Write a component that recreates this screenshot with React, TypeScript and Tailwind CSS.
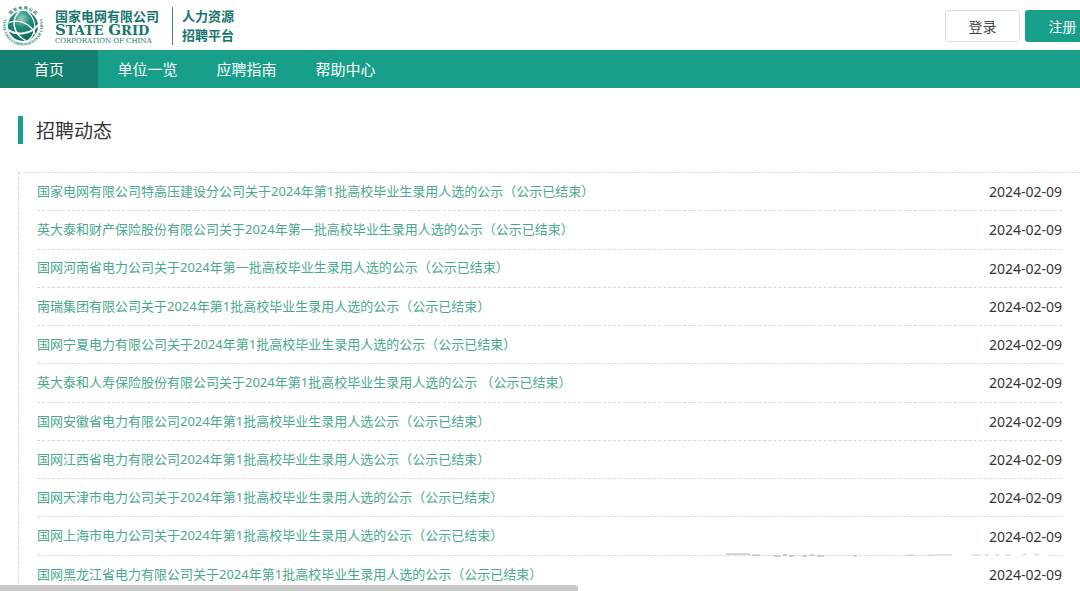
const sansFont = "font-['Noto_Sans','Noto_Sans_CJK_SC',sans-serif]";

const navItems = ["首页", "单位一览", "应聘指南", "帮助中心"];

const notices = [
  { title: "国家电网有限公司特高压建设分公司关于2024年第1批高校毕业生录用人选的公示（公示已结束）", date: "2024-02-09" },
  { title: "英大泰和财产保险股份有限公司关于2024年第一批高校毕业生录用人选的公示（公示已结束）", date: "2024-02-09" },
  { title: "国网河南省电力公司关于2024年第一批高校毕业生录用人选的公示（公示已结束）", date: "2024-02-09" },
  { title: "南瑞集团有限公司关于2024年第1批高校毕业生录用人选的公示（公示已结束）", date: "2024-02-09" },
  { title: "国网宁夏电力有限公司关于2024年第1批高校毕业生录用人选的公示（公示已结束）", date: "2024-02-09" },
  { title: "英大泰和人寿保险股份有限公司关于2024年第1批高校毕业生录用人选的公示 （公示已结束）", date: "2024-02-09" },
  { title: "国网安徽省电力有限公司2024年第1批高校毕业生录用人选公示（公示已结束）", date: "2024-02-09" },
  { title: "国网江西省电力有限公司2024年第1批高校毕业生录用人选公示（公示已结束）", date: "2024-02-09" },
  { title: "国网天津市电力公司关于2024年第1批高校毕业生录用人选的公示（公示已结束）", date: "2024-02-09" },
  { title: "国网上海市电力公司关于2024年第1批高校毕业生录用人选的公示（公示已结束）", date: "2024-02-09" },
  { title: "国网黑龙江省电力有限公司关于2024年第1批高校毕业生录用人选的公示（公示已结束）", date: "2024-02-09" },
];

function GlobeLogo() {
  return (
    <svg viewBox="0 0 44 44" className="h-11 w-11 shrink-0" aria-hidden="true">
      <defs>
        <radialGradient id="globe" cx="0.45" cy="0.25" r="0.75">
          <stop offset="0" stopColor="#9bd0c6" />
          <stop offset="0.4" stopColor="#23897c" />
          <stop offset="1" stopColor="#0b6a5f" />
        </radialGradient>
        <clipPath id="globe-clip">
          <circle cx="22" cy="22" r="15" />
        </clipPath>
        <path id="ring-top" d="M6.600 15 A17 17 0 0 1 37.400 15" />
        <path id="ring-bottom" d="M3.500 14 A20 20 0 1 0 40.500 14" />
      </defs>
      <circle cx="22" cy="22" r="15" fill="url(#globe)" />
      <g clipPath="url(#globe-clip)" fill="none" stroke="#fff">
        <path d="M20 6 C9 15 11 30 27 38" strokeWidth="1.500" />
        <path d="M26 7 C37 17 36 31 25 38" strokeWidth="1.200" />
        <path d="M6 25 C15 32 30 31 38 20" strokeWidth="1.900" />
        <path d="M7 19 C18 14 31 20 35 32" strokeWidth="1.200" />
      </g>
      <g fill="#1d7d72" fontWeight="700">
        <text fontSize="4" fontFamily="Noto Sans CJK SC, sans-serif">
          <textPath href="#ring-top" startOffset="50%" textAnchor="middle">国 家 电 网 公 司</textPath>
        </text>
        <text fontSize="4" fontFamily="Liberation Serif, serif">
          <textPath href="#ring-bottom" startOffset="50%" textAnchor="middle">STATE GRID CORPORATION OF CHINA</textPath>
        </text>
      </g>
    </svg>
  );
}

function Header() {
  return (
    <header className="flex h-[50px] items-center justify-between pt-[2px] pl-px">
      <a href="#" className="flex items-center text-[#17756b]">
        <GlobeLogo />
        <span className="ml-[10px] flex w-[104px] flex-col whitespace-nowrap">
          <span className="text-[13px] leading-[16px] font-bold">国家电网有限公司</span>
          <span className="font-['DejaVu_Serif',serif] text-[13px] leading-[12px] font-bold">
            <span className="text-[15px]">S</span>TATE <span className="text-[15px]">G</span>RID
          </span>
          <span className="font-['DejaVu_Serif',serif] text-[7px] leading-[8px]">CORPORATION OF CHINA</span>
        </span>
        <span className="ml-[13px] border-l border-[#3b8c84] pl-[9px] text-[13px] leading-[19px] font-bold">
          <span className="block">人力资源</span>
          <span className="block">招聘平台</span>
        </span>
      </a>

      {/* the register button runs past the right edge of the window */}
      <div className="-mr-5 flex shrink-0 gap-[5px] text-[14px]">
        <button type="button" className="h-8 w-[75px] rounded-[3px] border border-[#ddd] bg-white text-[#444]">
          登录
        </button>
        <button type="button" className="h-8 w-[75px] rounded-[3px] bg-[#189f8a] text-white">
          注册
        </button>
      </div>
    </header>
  );
}

function NavBar() {
  return (
    <nav className="flex h-[38px] bg-[#189f8a] text-[15px] text-white">
      {navItems.map((item, index) => (
        <a
          key={item}
          href="#"
          className={`flex items-center justify-center ${index === 0 ? "w-[98px] bg-[#168070]" : "w-[99px]"}`}
        >
          {item}
        </a>
      ))}
    </nav>
  );
}

// leftover strokes of a faded watermark above the list
function WatermarkTrace() {
  return (
    <svg viewBox="0 0 340 24" className="absolute right-[18px] bottom-9 h-6 w-[340px]" aria-hidden="true">
      <path d="M212 19 H326 V23 H212 Z" fill="#fff" />
      <g fill="none" stroke="#aaa" strokeWidth="1">
        <path d="M4 20 h24 m2 1 h8 M51 22 h7 m3 -1 h4 m2 1 h5 M80 22 h5 m3 -1 h4 m3 1 h7 M131 22 h4" />
        <path d="M184 21 h8 M206 21 h24 M250 21 h9 m4 0 h4 m6 0 h4 m6 0 h6 M301 21 l3 -1 M312 20 l5 1" stroke="#ccc" />
      </g>
    </svg>
  );
}

export default function App() {
  return (
    <div className={`h-screen overflow-hidden bg-white ${sansFont}`}>
      <Header />
      <NavBar />

      <main className="pt-7 pl-[18px]">
        <h1 className="border-l-[5px] border-[#189f8a] pt-[2px] pl-[13px] text-[19px] leading-[26px] text-[#333]">
          招聘动态
        </h1>

        <div className="relative mt-7 border-t border-l border-dashed border-[#d9d9d9] px-[18px]">
          <ul className="grid min-h-[421px] auto-rows-fr">
            {notices.map((notice) => (
              <li
                key={notice.title}
                className="flex items-center justify-between border-b border-dashed border-[#d9d9d9] whitespace-nowrap"
              >
                <a href="#" className="text-[13px] text-[#4aa890]">
                  {notice.title}
                </a>
                <time dateTime={notice.date} className="text-[14px] text-[#333]">
                  {notice.date}
                </time>
              </li>
            ))}
          </ul>
          <WatermarkTrace />
        </div>
      </main>

      <div className="fixed bottom-0 left-0 h-[6px] w-[578px] rounded-tr-[3px] bg-[#c9c9c9]" />
    </div>
  );
}
